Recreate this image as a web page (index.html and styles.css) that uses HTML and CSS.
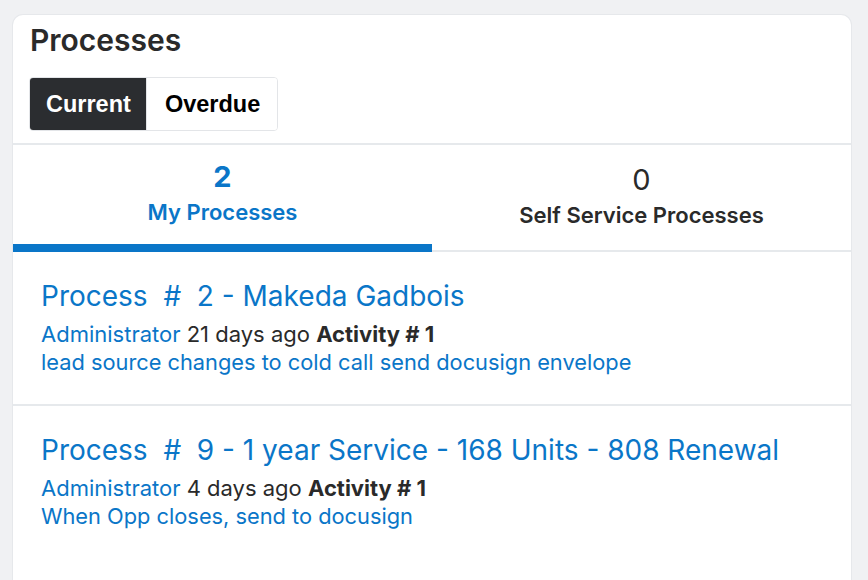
FILE: index.html
```html
<!DOCTYPE html>
<html lang="en">
<head>
<meta charset="utf-8">
<title>Processes</title>
<link rel="stylesheet" href="styles.css">
</head>
<body>
<div class="card">
  <div class="card-header">
    <h2 class="card-title">Processes</h2>
    <div class="btn-group">
      <button class="btn btn-active">Current</button>
      <button class="btn">Overdue</button>
    </div>
  </div>
  <div class="tabs">
    <div class="tab tab-active">
      <div class="tab-count">2</div>
      <div class="tab-label">My Processes</div>
    </div>
    <div class="tab">
      <div class="tab-count">0</div>
      <div class="tab-label">Self Service Processes</div>
    </div>
  </div>
  <ul class="process-list">
    <li class="process">
      <a class="process-title">Process&nbsp; #&nbsp; 2 - Makeda Gadbois</a>
      <div class="process-meta"><a class="user">Administrator</a> 21 days ago <strong>Activity # 1</strong></div>
      <a class="process-desc">lead source changes to cold call send docusign envelope</a>
    </li>
    <li class="process">
      <a class="process-title">Process&nbsp; #&nbsp; 9 - 1 year Service - 168 Units - 808 Renewal</a>
      <div class="process-meta"><a class="user">Administrator</a> 4 days ago <strong>Activity # 1</strong></div>
      <a class="process-desc">When Opp closes, send to docusign</a>
    </li>
  </ul>
</div>
</body>
</html>
```
FILE: styles.css
```css
* { box-sizing: border-box; }
html, body { margin: 0; height: 100%; }
body {
  background: #f0f1f3;
  padding: 14px 16px 0 12px;
  font-family: Inter, "Noto Sans", sans-serif;
  color: #2a2a2a;
  overflow: hidden;
}
.card {
  background: #fff;
  border: 1px solid #e6e8eb;
  border-bottom: none;
  border-radius: 11px 11px 0 0;
  min-height: 600px;
}
.card-header {
  padding: 7px 16px 12px 17px;
}
.card-title {
  margin: 0;
  font-size: 30px;
  line-height: 36px;
  font-weight: 600;
  color: #2a2a2a;
}
.btn-group {
  display: inline-flex;
  margin-top: 19px;
  margin-left: -1px;
  border: 1px solid #e3e5e8;
  border-radius: 4px;
  overflow: hidden;
}
.btn {
  font-family: "Liberation Sans", Arial, sans-serif;
  font-weight: 700;
  font-size: 23.5px;
  height: 52px;
  padding: 0 15px 0 16px;
  border: none;
  background: #fff;
  color: #000;
}
.btn + .btn { border-left: 1px solid #e3e5e8; padding: 0 17px 0 18px; }
.btn-active { background: #2b2d30; color: #fff; }
.tabs {
  display: grid;
  grid-template-columns: 1fr 1fr;
  align-items: start;
  border-top: 2px solid #e6e9ec;
  border-bottom: 2px solid #e6e9ec;
}
.tab {
  display: flex;
  flex-direction: column;
  align-items: center;
  justify-content: center;
  height: 105px;
  padding-bottom: 6px;
}
.tab-active {
  height: 107px;
  border-bottom: 8px solid #0a76c8;
  margin-bottom: -2px;
  color: #0a76c8;
}
.tab-count {
  font-size: 29px;
  line-height: 35px;
  font-weight: 400;
}
.tab-active .tab-count { font-weight: 700; }
.tab-label {
  margin-top: 5px;
  font-size: 22px;
  line-height: 26px;
  font-weight: 600;
}
.process-list {
  list-style: none;
  margin: 0;
  padding: 0;
}
.process {
  padding: 26px 28px 28px;
}
.process + .process {
  border-top: 2px solid #e6e9ec;
}
.process-title {
  display: block;
  font-size: 28px;
  line-height: 36px;
  color: #0a76c8;
}
.process-meta {
  margin-top: 6px;
  font-size: 22px;
  line-height: 28px;
  color: #2a2a2a;
}
.process-meta strong { font-weight: 700; }
.user { color: #0a76c8; }
.process-desc {
  display: block;
  font-size: 21.8px;
  line-height: 28px;
  color: #0a76c8;
}
```
